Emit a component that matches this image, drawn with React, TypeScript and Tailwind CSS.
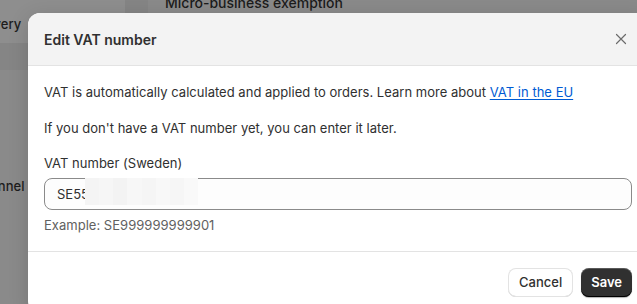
import React from 'react';

// 模糊遮挡块（截图里被打码的那段 VAT 号）
const blurShades = ['#f4f4f4', '#f6f6f6', '#f3f3f3', '#f7f7f7', '#f5f5f5', '#f8f8f8', '#f6f6f6', '#f9f9f9'];

function CloseIcon() {
  return (
    <svg width="12" height="12" viewBox="0 0 12 12" fill="none">
      <path d="M1.5 1.5 L10.5 10.5 M10.5 1.5 L1.5 10.5" stroke="#6b6b6b" strokeWidth="1.2" strokeLinecap="round" />
    </svg>
  );
}

export default function App() {
  return (
    <div
      className="relative w-[637px] h-[304px] overflow-hidden bg-[#8a8a8a] text-[#303030]"
      style={{ fontFamily: 'Inter, "Noto Sans", sans-serif' }}
    >
      {/* 背后被遮罩的页面 */}
      <div className="flex h-full">
        <div className="w-[125px] flex flex-col text-[13px] font-medium text-[#1c1c1c] overflow-hidden">
          <div className="h-[43px] bg-[#8e8e8e] flex items-center -ml-[30px] pt-[7px]">Delivery</div>
          <div className="h-[27px] bg-[#858585]" />
          <div className="h-[104px]" />
          <div className="h-[26px] flex items-center -ml-[62px] whitespace-nowrap">Sales channel</div>
        </div>
        <div className="w-[23px] h-[13px] bg-[#858585]" />
        <div className="flex-1 bg-[#8a8a8a]">
          <div className="pl-[17px] -mt-[8px] text-[14px] font-medium text-[#1c1c1c]">Micro-business exemption</div>
        </div>
      </div>

      {/* 弹窗 */}
      <div className="absolute left-[28px] top-[13px] w-[620px] rounded-xl bg-white overflow-hidden shadow-[0_4px_20px_rgba(0,0,0,0.15)]">
        <div className="h-[53px] bg-[#f3f3f3] border-b border-[#e3e3e3] flex items-center justify-between pl-4 pr-[21px]">
          <h2 className="text-[14px] font-semibold text-[#303030]">Edit VAT number</h2>
          <CloseIcon />
        </div>

        <div className="p-4 text-[13px] leading-5 text-[#303030] tracking-[0.02px]">
          <p>
            VAT is automatically calculated and applied to orders. Learn more about{' '}
            <a className="text-[#005bd3] underline underline-offset-2">VAT in the EU</a>
          </p>
          <p className="mt-4">If you don't have a VAT number yet, you can enter it later.</p>

          <label className="block mt-[15px]">VAT number (Sweden)</label>
          <div className="relative mt-[5px] h-[32px] rounded-lg border border-[#8a8a8a] bg-[#fdfdfd] flex items-center px-3">
            <span>SE55</span>
            <div className="absolute left-[40px] top-[-1px] w-[113px] h-[27px] flex">
              {blurShades.map((c, i) => (
                <div key={i} className="flex-1 h-full" style={{ background: c }} />
              ))}
            </div>
          </div>
          <p className="mt-[5px] text-[#616161]">Example: SE999999999901</p>
        </div>

        <div className="border-t border-[#e3e3e3] p-4 flex justify-end gap-2">
          <button className="h-[29px] px-[11px] rounded-lg bg-white text-[13px] font-medium text-[#303030] shadow-[inset_0_0_0_1px_#e3e3e3,inset_0_-1px_0_#cccccc]">
            Cancel
          </button>
          <button className="h-[29px] px-[10px] rounded-lg bg-[#303030] text-[13px] font-semibold text-white shadow-[inset_0_1px_0_rgba(255,255,255,0.2),inset_0_-1px_0_#000,0_1px_1px_rgba(0,0,0,0.3)]">
            Save
          </button>
        </div>
      </div>
    </div>
  );
}
